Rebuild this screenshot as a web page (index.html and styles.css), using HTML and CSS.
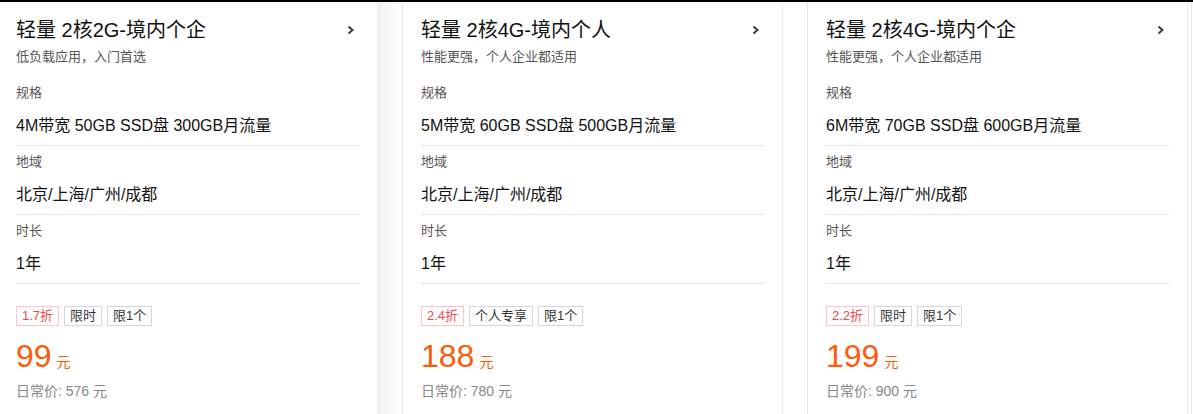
FILE: index.html
```html
<!DOCTYPE html>
<html lang="zh-CN">
<head>
  <meta charset="UTF-8">
  <meta name="viewport" content="width=device-width, initial-scale=1.0">
  <title>轻量应用服务器</title>
  <link rel="stylesheet" href="styles.css">
</head>
<body>
  <main class="cards">

    <!-- 2核2G -->
    <section class="card card-first">
      <div class="card-head">
        <h2 class="card-title">轻量 2核2G-境内个企</h2>
        <svg class="chevron" width="8" height="10" viewBox="0 0 8 10"><path d="M1.5 1.5 L5.5 5 L1.5 8.5" fill="none" stroke="#3a3a3a" stroke-width="2"/></svg>
      </div>
      <p class="card-desc">低负载应用，入门首选</p>
      <div class="spec">
        <div class="spec-label">规格</div>
        <div class="spec-value">4M带宽 50GB SSD盘 300GB月流量</div>
      </div>
      <div class="spec">
        <div class="spec-label">地域</div>
        <div class="spec-value">北京/上海/广州/成都</div>
      </div>
      <div class="spec">
        <div class="spec-label">时长</div>
        <div class="spec-value">1年</div>
      </div>
      <div class="tags">
        <span class="tag tag-red">1.7折</span>
        <span class="tag">限时</span>
        <span class="tag">限1个</span>
      </div>
      <div class="price">99<span class="unit">元</span></div>
      <div class="old-price">日常价: 576 元</div>
    </section>

    <!-- 2核4G 个人 -->
    <section class="card">
      <div class="card-head">
        <h2 class="card-title">轻量 2核4G-境内个人</h2>
        <svg class="chevron" width="8" height="10" viewBox="0 0 8 10"><path d="M1.5 1.5 L5.5 5 L1.5 8.5" fill="none" stroke="#3a3a3a" stroke-width="2"/></svg>
      </div>
      <p class="card-desc">性能更强，个人企业都适用</p>
      <div class="spec">
        <div class="spec-label">规格</div>
        <div class="spec-value">5M带宽 60GB SSD盘 500GB月流量</div>
      </div>
      <div class="spec">
        <div class="spec-label">地域</div>
        <div class="spec-value">北京/上海/广州/成都</div>
      </div>
      <div class="spec">
        <div class="spec-label">时长</div>
        <div class="spec-value">1年</div>
      </div>
      <div class="tags">
        <span class="tag tag-red">2.4折</span>
        <span class="tag">个人专享</span>
        <span class="tag">限1个</span>
      </div>
      <div class="price">188<span class="unit">元</span></div>
      <div class="old-price">日常价: 780 元</div>
    </section>

    <!-- 2核4G 个企 -->
    <section class="card">
      <div class="card-head">
        <h2 class="card-title">轻量 2核4G-境内个企</h2>
        <svg class="chevron" width="8" height="10" viewBox="0 0 8 10"><path d="M1.5 1.5 L5.5 5 L1.5 8.5" fill="none" stroke="#3a3a3a" stroke-width="2"/></svg>
      </div>
      <p class="card-desc">性能更强，个人企业都适用</p>
      <div class="spec">
        <div class="spec-label">规格</div>
        <div class="spec-value">6M带宽 70GB SSD盘 600GB月流量</div>
      </div>
      <div class="spec">
        <div class="spec-label">地域</div>
        <div class="spec-value">北京/上海/广州/成都</div>
      </div>
      <div class="spec">
        <div class="spec-label">时长</div>
        <div class="spec-value">1年</div>
      </div>
      <div class="tags">
        <span class="tag tag-red">2.2折</span>
        <span class="tag">限时</span>
        <span class="tag">限1个</span>
      </div>
      <div class="price">199<span class="unit">元</span></div>
      <div class="old-price">日常价: 900 元</div>
    </section>

    <div class="edge"></div>
  </main>
</body>
</html>
```

FILE: styles.css
```css
/* Reset */
* {
  margin: 0;
  padding: 0;
  box-sizing: border-box;
}

body {
  font-family: "Liberation Sans", Arial, "Noto Sans CJK SC", sans-serif;
  background-color: #fff;
  color: #222;
  border-top: 2px solid #000;
  height: 414px;
  overflow: hidden;
}

/* Card row */
.cards {
  display: flex;
  gap: 24px;
  margin-left: -3px;
  height: 412px;
}

.card {
  position: relative;
  flex: 0 0 381px;
  padding: 14px 17px 0 18px;
  border: 1px solid #e6e6ee;
  border-top: none;
  border-bottom: none;
  background-color: #fff;
}

/* fade on the right of the first card */
.card-first::after {
  content: "";
  position: absolute;
  top: 0;
  bottom: 0;
  left: 100%;
  width: 24px;
  background: linear-gradient(to right, #f1f1f4, #fff);
}

.edge {
  flex: 0 0 1px;
  margin-left: -21px;
  background-color: #e6e6ee;
}

/* Header */
.card-head {
  display: flex;
  align-items: center;
  justify-content: space-between;
}

.card-title {
  font-size: 20px;
  font-weight: normal;
  line-height: 28px;
  color: #111;
}

.chevron {
  margin-right: 5px;
}

.card-desc {
  margin-top: 4px;
  margin-bottom: 11px;
  font-size: 13px;
  line-height: 18px;
  color: #555;
}

/* Spec rows */
.spec {
  padding: 6px 0 7px;
  border-bottom: 1px solid #e5e5ec;
}

.spec-label {
  font-size: 13px;
  line-height: 20px;
  color: #555;
}

.spec-value {
  margin-top: 11px;
  font-size: 16px;
  line-height: 24px;
  color: #111;
}

/* Tags */
.tags {
  display: flex;
  gap: 5px;
  margin-top: 22px;
}

.tag {
  height: 20px;
  padding: 0 5px;
  border: 1px solid #d6d6de;
  font-size: 13px;
  line-height: 18px;
  color: #333;
}

.tag-red {
  border-color: #ffc4cb;
  color: #f5474f;
}

/* Price */
.price {
  margin-top: 12px;
  font-size: 32px;
  line-height: 36px;
  color: #ff5a0a;
}

.price .unit {
  margin-left: 5px;
  font-size: 14px;
}

.old-price {
  margin-top: 1px;
  font-size: 14px;
  line-height: 20px;
  color: #888;
}
```
